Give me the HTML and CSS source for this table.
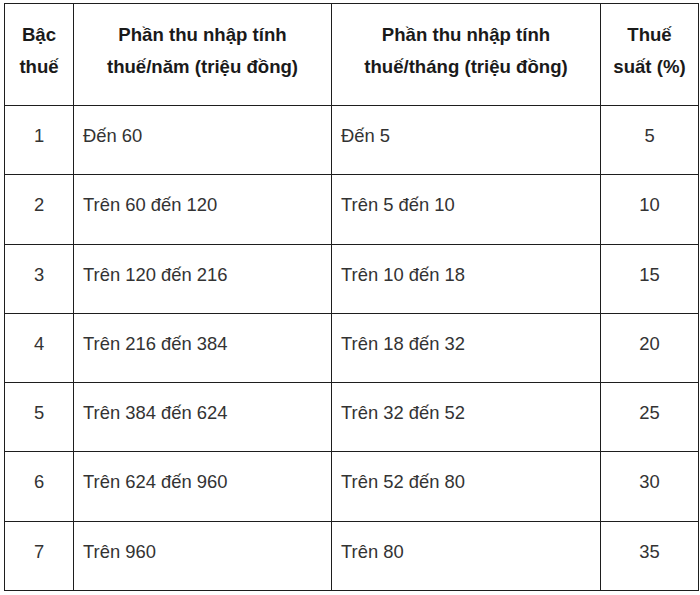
FILE: index.html
```html
<!DOCTYPE html>
<html lang="vi">
<head>
<meta charset="utf-8">
<title>Biểu thuế</title>
<link rel="stylesheet" href="styles.css">
</head>
<body>
<table class="tax">
  <colgroup>
    <col class="c1"><col class="c2"><col class="c3"><col class="c4">
  </colgroup>
  <thead>
    <tr class="head">
      <th>Bậc<br>thuế</th>
      <th>Phần thu nhập tính<br>thuế/năm (triệu đồng)</th>
      <th>Phần thu nhập tính<br>thuế/tháng (triệu đồng)</th>
      <th>Thuế<br>suất (%)</th>
    </tr>
  </thead>
  <tbody>
    <tr><td class="num">1</td><td>Đến 60</td><td>Đến 5</td><td class="num">5</td></tr>
    <tr><td class="num">2</td><td>Trên 60 đến 120</td><td>Trên 5 đến 10</td><td class="num">10</td></tr>
    <tr><td class="num">3</td><td>Trên 120 đến 216</td><td>Trên 10 đến 18</td><td class="num">15</td></tr>
    <tr><td class="num">4</td><td>Trên 216 đến 384</td><td>Trên 18 đến 32</td><td class="num">20</td></tr>
    <tr><td class="num">5</td><td>Trên 384 đến 624</td><td>Trên 32 đến 52</td><td class="num">25</td></tr>
    <tr><td class="num">6</td><td>Trên 624 đến 960</td><td>Trên 52 đến 80</td><td class="num">30</td></tr>
    <tr><td class="num">7</td><td>Trên 960</td><td>Trên 80</td><td class="num">35</td></tr>
  </tbody>
</table>
</body>
</html>
```
FILE: styles.css
```css
html, body {
  margin: 0;
  padding: 0;
  background: #ffffff;
}
body {
  padding: 3px 0 0 4px;
  font-family: "Liberation Sans", Arial, sans-serif;
  font-size: 18.4px;
  color: #333333;
}
.tax {
  border-collapse: collapse;
  table-layout: fixed;
  width: 694px;
}
.c1 { width: 69px; }
.c2 { width: 258px; }
.c3 { width: 269px; }
.c4 { width: 98px; }
.tax th,
.tax td {
  border: 1px solid #1e1e1e;
  vertical-align: top;
  line-height: 27px;
  padding: 16px 10px 0 9px;
}
.tax th {
  font-weight: bold;
  font-size: 18.6px;
  line-height: 32px;
  padding-top: 15px;
  padding-left: 0;
  padding-right: 0;
  color: #1a1a1a;
  text-align: center;
}
.head { height: 102px; }
.tax tbody tr { height: 69.3px; }
.tax td { text-align: left; }
.tax td.num { text-align: center; padding-left: 0; padding-right: 0; }
```
